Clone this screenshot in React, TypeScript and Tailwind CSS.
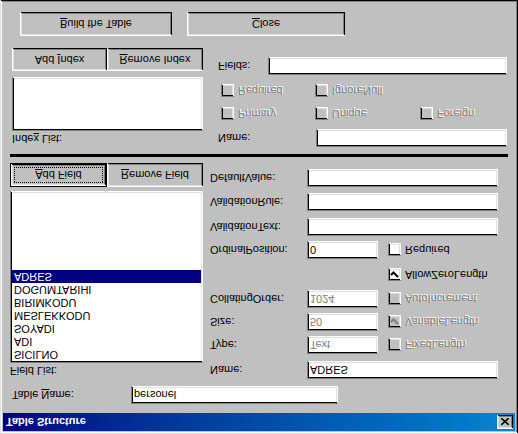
import React from "react";

const sunken =
  "shadow-[inset_1px_1px_#808080,inset_-1px_-1px_#ffffff,inset_2px_2px_#000000,inset_-2px_-2px_#dfdfdf]";
const raised =
  "shadow-[inset_1px_1px_#ffffff,inset_-1px_-1px_#000000,inset_2px_2px_#dfdfdf,inset_-2px_-2px_#808080]";
const etched = "text-[#808080] [text-shadow:1px_1px_#ffffff]";

function TextBox({ w, value, disabled }: { w: string; value?: string; disabled?: boolean }) {
  return (
    <div className={`${w} h-[18px] bg-white ${sunken} flex items-center pl-[3px] ${disabled ? "text-[#808080]" : "text-black"}`}>
      {value}
    </div>
  );
}

function Check({ checked, disabled, label }: { checked?: boolean; disabled?: boolean; label: string }) {
  return (
    <div className="flex items-center gap-[4px]">
      <span className={`w-[13px] h-[13px] ${disabled ? "bg-[#c0c0c0]" : "bg-white"} ${sunken} flex items-center justify-center`}>
        {checked && (
          <svg width="9" height="9" viewBox="0 0 9 9">
            <path d="M1 4 L3.5 6.5 L8 2" fill="none" stroke={disabled ? "#808080" : "#000"} strokeWidth="2" />
          </svg>
        )}
      </span>
      <span className={disabled ? etched : "text-black"}>{label}</span>
    </div>
  );
}

function Btn({ w, h, children, focus }: { w: string; h: string; children: React.ReactNode; focus?: boolean }) {
  if (focus) {
    return (
      <div className={`${w} ${h} border border-black bg-[#c0c0c0]`}>
        <div className={`w-full h-full ${raised} flex items-center justify-center p-[3px]`}>
          <div className="w-full h-full border border-dotted border-black flex items-center justify-center">{children}</div>
        </div>
      </div>
    );
  }
  return <div className={`${w} ${h} bg-[#c0c0c0] ${raised} flex items-center justify-center`}>{children}</div>;
}

const fields = ["SICILNO", "ADI", "SOYADI", "MESLEKKODU", "BIRIMKODU", "DOGUMTARIHI", "ADRES"];

function Row({ mt, label, children }: { mt: string; label: string; children: React.ReactNode }) {
  return (
    <div className={`${mt} h-[18px] flex items-center`}>
      <span className="w-[97px]">{label}</span>
      {children}
    </div>
  );
}

export default function App() {
  return (
    <div className="w-[518px] h-[434px] -scale-y-100 bg-[#c0c0c0] font-['Liberation_Sans',sans-serif] text-[11px] leading-none text-black shadow-[inset_1px_1px_#dfdfdf,inset_-1px_-1px_#000000,inset_2px_2px_#ffffff,inset_-2px_-2px_#808080] p-[3px] flex flex-col overflow-hidden">
      {/* title bar */}
      <div className="h-[18px] bg-gradient-to-r from-[#000080] to-[#1084d0] flex items-center justify-between pl-[3px] pr-[2px]">
        <span className="text-white font-bold text-[11px]">Table Structure</span>
        <div className={`w-[16px] h-[14px] bg-[#c0c0c0] ${raised} flex items-center justify-center`}>
          <svg width="8" height="7" viewBox="0 0 8 7">
            <path d="M0 0 L8 7 M8 0 L0 7" stroke="#000" strokeWidth="1.6" />
          </svg>
        </div>
      </div>

      {/* table name */}
      <div className="mt-[9px] h-[18px] flex items-center">
        <span className="ml-[9px] w-[119px]">
          Table <u>N</u>ame:
        </span>
        <TextBox w="w-[207px]" value="personel" />
      </div>

      {/* field section */}
      <div className="mt-[7px] flex">
        <div className="ml-[7px] w-[193px] flex flex-col">
          <div className="h-[16px] flex items-center">Field List:</div>
          <div className={`h-[172px] bg-white ${sunken} p-[2px] flex flex-col`}>
            {fields.map((f) => (
              <div
                key={f}
                className={`h-[13px] px-[2px] flex items-center ${f === "ADRES" ? "bg-[#000080] text-white" : ""}`}
              >
                {f}
              </div>
            ))}
          </div>
          <div className="mt-[4px] flex">
            <Btn w="w-[97px]" h="h-[24px]" focus>
              <span>
                <u>A</u>dd Field
              </span>
            </Btn>
            <Btn w="w-[96px]" h="h-[24px]">
              <span>
                <u>R</u>emove Field
              </span>
            </Btn>
          </div>
        </div>

        <div className="ml-[7px] flex flex-col">
          <Row mt="mt-0" label="Name:">
            <TextBox w="w-[191px]" value="ADRES" />
          </Row>
          <Row mt="mt-[7px]" label="Type:">
            <TextBox w="w-[71px]" value="Text" disabled />
            <div className="ml-[10px]">
              <Check disabled label="FixedLength" />
            </div>
          </Row>
          <Row mt="mt-[5px]" label="Size:">
            <TextBox w="w-[71px]" value="50" disabled />
            <div className="ml-[10px]">
              <Check disabled checked label="VariableLength" />
            </div>
          </Row>
          <Row mt="mt-[5px]" label="CollatingOrder:">
            <TextBox w="w-[71px]" value="1024" disabled />
            <div className="ml-[10px]">
              <Check disabled label="AutoIncrement" />
            </div>
          </Row>
          <Row mt="mt-[6px]" label="">
            <div className="w-[71px]" />
            <div className="ml-[10px]">
              <Check checked label="AllowZeroLength" />
            </div>
          </Row>
          <Row mt="mt-[7px]" label="OrdinalPosition:">
            <TextBox w="w-[71px]" value="0" />
            <div className="ml-[10px]">
              <Check label="Required" />
            </div>
          </Row>
          <Row mt="mt-[5px]" label="ValidationText:">
            <TextBox w="w-[191px]" />
          </Row>
          <Row mt="mt-[7px]" label="ValidationRule:">
            <TextBox w="w-[191px]" />
          </Row>
          <Row mt="mt-[6px]" label="DefaultValue:">
            <TextBox w="w-[191px]" />
          </Row>
        </div>
      </div>

      {/* separator */}
      <div className="mt-[6px] ml-[7px] w-[498px] h-[3px] bg-black" />

      {/* index section */}
      <div className="mt-[7px] flex">
        <div className="ml-[9px] w-[191px] flex flex-col">
          <div className="h-[16px] flex items-center">
            <span>
              Inde<u>x</u> List:
            </span>
          </div>
          <div className={`h-[54px] bg-white ${sunken}`} />
          <div className="mt-[6px] flex">
            <Btn w="w-[95px]" h="h-[23px]">
              <span>
                Add <u>I</u>ndex
              </span>
            </Btn>
            <Btn w="w-[96px]" h="h-[23px]">
              <span>
                <u>R</u>emove Index
              </span>
            </Btn>
          </div>
        </div>

        <div className="ml-[15px] flex flex-col">
          <div className="h-[18px] flex items-center">
            <span className="w-[98px]">Name:</span>
            <TextBox w="w-[191px]" />
          </div>
          <div className="mt-[7px] h-[16px] flex items-center pl-[3px]">
            <div className="w-[94px]">
              <Check disabled label="Primary" />
            </div>
            <div className="w-[105px]">
              <Check disabled label="Unique" />
            </div>
            <Check disabled label="Foreign" />
          </div>
          <div className="mt-[7px] h-[16px] flex items-center pl-[3px]">
            <div className="w-[94px]">
              <Check disabled label="Required" />
            </div>
            <Check disabled label="IgnoreNull" />
          </div>
          <div className="mt-[8px] h-[18px] flex items-center">
            <span className="w-[50px]">Fields:</span>
            <TextBox w="w-[239px]" />
          </div>
        </div>
      </div>

      {/* bottom buttons */}
      <div className="mt-[12px] ml-[17px] flex gap-[15px]">
        <Btn w="w-[152px]" h="h-[24px]">
          <span>
            <u>B</u>uild the Table
          </span>
        </Btn>
        <Btn w="w-[158px]" h="h-[24px]">
          <span>
            <u>C</u>lose
          </span>
        </Btn>
      </div>
    </div>
  );
}
